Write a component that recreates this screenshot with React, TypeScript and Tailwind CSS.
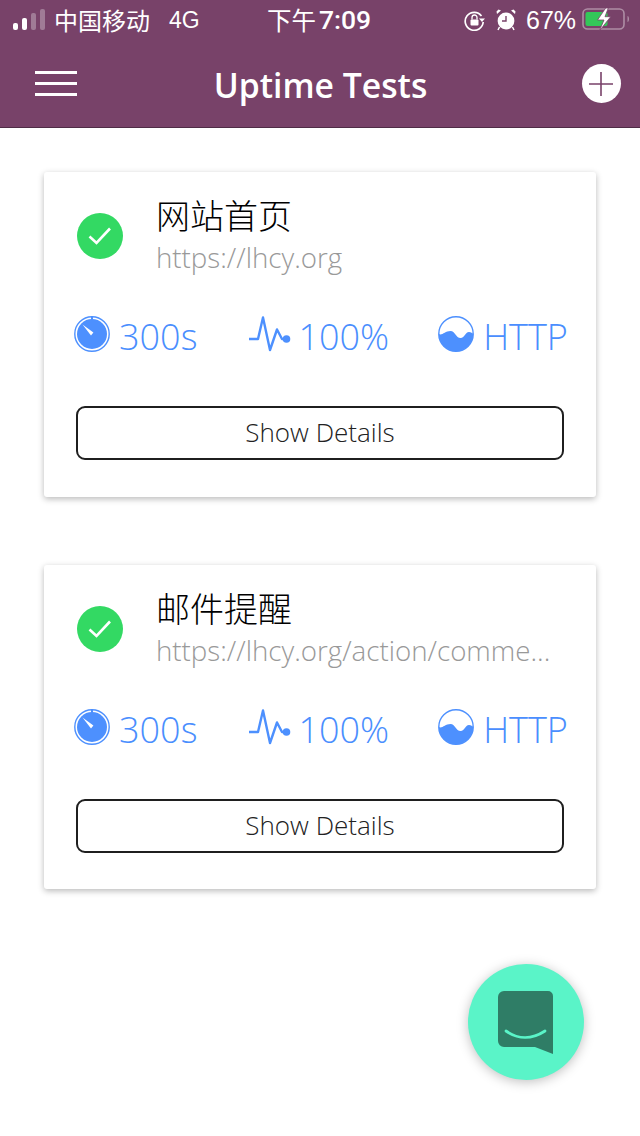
import React from "react";

const F = "font-['Open_Sans','Noto_Sans_CJK_SC',sans-serif]";

function Check() {
  return (
    <div className="w-[46px] h-[46px] mt-[20px] rounded-full bg-[#33d963] flex items-center justify-center shrink-0">
      <svg width="24" height="20" viewBox="0 0 24 20" fill="none">
        <path d="M1.5 10.5 L8.5 17 L22 2.5" stroke="#fff" strokeWidth="2.6" />
      </svg>
    </div>
  );
}

function Timer() {
  return (
    <svg width="36" height="36" viewBox="0 0 36 36">
      <circle cx="18" cy="18" r="17.2" fill="none" stroke="#4d90fe" strokeWidth="1.4" />
      <circle cx="18" cy="18" r="15" fill="#4d90fe" />
      <path d="M17 1 L19 1 L19 5 L17 5 Z" fill="#4d90fe" />
      <path d="M8.5 8.5 L19.4 16.6 L17 19.4 Z" fill="#fff" />
    </svg>
  );
}

function Pulse() {
  return (
    <svg width="42" height="36" viewBox="0 0 42 36" fill="none">
      <path d="M0 23 H9 L14 1.5 L21 34 L28 13.5 L33 23 H37" stroke="#4d90fe" strokeWidth="2.4" strokeLinejoin="round" />
      <circle cx="37.5" cy="23" r="3.8" fill="#4d90fe" />
    </svg>
  );
}

function Wave() {
  return (
    <svg width="36" height="36" viewBox="0 0 36 36">
      <circle cx="18" cy="18" r="17.2" fill="none" stroke="#4d90fe" strokeWidth="1.4" />
      <path d="M0.8 18 C4 20 7 15 12.5 15 C17 15 18 22 22.5 22 C27 22 27 16 31 16 C33 16 34.5 17 35.2 18 A17.2 17.2 0 0 1 0.8 18 Z" fill="#4d90fe" />
    </svg>
  );
}

function Stat({ icon, text, gap }: { icon: React.ReactNode; text: string; gap: string }) {
  return (
    <div className={`flex items-center ${gap}`}>
      <div className="-mt-[6px] shrink-0">{icon}</div>
      <span className="text-[36px] leading-[46px] font-light text-[#4a8efe]">{text}</span>
    </div>
  );
}

function Card({ title, url, h }: { title: string; url: string; h: string }) {
  return (
    <div className={`mx-[44px] w-[552px] ${h} bg-white rounded-[3px] shadow-[0_2px_6px_rgba(0,0,0,0.28)] flex flex-col`}>
      <div className="flex items-start pl-[33px] pt-[21px]">
        <Check />
        <div className="ml-[33px] w-[400px]">
          <div className="text-[34px] leading-[46px] font-light text-black">{title}</div>
          <div className="text-[27.7px] leading-[36px] font-light text-[#999999] whitespace-nowrap">{url}</div>
        </div>
      </div>
      <div className="flex items-center pl-[30px] mt-[39px]">
        <Stat icon={<Timer />} text="300s" gap="gap-[9px]" />
        <div className="ml-[52px]">
          <Stat icon={<Pulse />} text="100%" gap="gap-[7px]" />
        </div>
        <div className="ml-[49px]">
          <Stat icon={<Wave />} text="HTTP" gap="gap-[9px]" />
        </div>
      </div>
      <div className="mx-[32px] mt-[46px] h-[54px] pb-[1px] rounded-[9px] border-2 border-[#1f1f1f] flex items-center justify-center text-[26px] font-light text-[#222]">
        Show Details
      </div>
    </div>
  );
}

export default function App() {
  return (
    <div className={`relative w-[640px] h-[1136px] bg-white overflow-hidden ${F}`}>
      <header className="h-[128px] bg-[#784269] border-b border-[#4f2c46] text-white">
        <div className="h-[40px] flex items-center relative">
          <div className="flex items-end gap-[4px] ml-[13px] h-[21px] mt-[-1px]">
            <div className="w-[5px] h-[7px] rounded-[2px] bg-white" />
            <div className="w-[5px] h-[12px] rounded-[2px] bg-white" />
            <div className="w-[5px] h-[17px] rounded-[2px] bg-white/30" />
            <div className="w-[5px] h-[21px] rounded-[2px] bg-white/30" />
          </div>
          <span className="ml-[9px] text-[24px] leading-[32px] font-['Noto_Sans_CJK_SC','Liberation_Sans',sans-serif] font-normal w-[113px] whitespace-nowrap">中国移动</span>
          <span className="ml-[2px] text-[23px] leading-[32px] font-['Liberation_Sans',sans-serif]">4G</span>
          <span className="absolute left-[267px] top-[4px] flex items-center gap-[3px] leading-[32px] whitespace-nowrap">
            <span className="text-[24.5px] font-['Noto_Sans_CJK_SC',sans-serif]">下午</span>
            <span className="text-[26.5px] font-medium font-['Roboto',sans-serif]">7:09</span>
          </span>
          <div className="ml-auto flex items-center mr-[10px]">
            <svg width="21" height="21" viewBox="0 0 21 21" fill="none" className="mr-[11px]">
              <path d="M17.5 6 A9 9 0 1 0 19.2 12" stroke="#fff" strokeWidth="1.7" />
              <path d="M15 8.5 H21 L18 12 Z" fill="#fff" />
              <rect x="6.5" y="9.5" width="8" height="6" rx="1" fill="#fff" />
              <path d="M8 9.5 V7.5 A2.5 2.5 0 0 1 13 7.5 V9.5" stroke="#fff" strokeWidth="1.3" />
            </svg>
            <svg width="20" height="22" viewBox="0 0 20 22" className="mr-[10px]">
              <circle cx="10" cy="12" r="8.4" fill="#fff" />
              <path d="M10 7 V12 H6" stroke="#784269" strokeWidth="1.4" fill="none" />
              <path d="M1 5 L5 1.5 L2.5 0.5 L0.5 2.5 Z M19 5 L15 1.5 L17.5 0.5 L19.5 2.5 Z" fill="#fff" />
              <path d="M3.5 18 L2 21 M16.5 18 L18 21" stroke="#fff" strokeWidth="1.5" />
            </svg>
            <span className="text-[25px] leading-[32px] font-['Liberation_Sans',sans-serif] font-normal w-[56px] whitespace-nowrap">67%</span>
            <svg width="48" height="26" viewBox="0 0 48 26">
              <rect x="1" y="2" width="41" height="20" rx="4.5" fill="none" stroke="#fff" strokeOpacity="0.4" strokeWidth="1.6" />
              <rect x="3.5" y="5" width="22" height="14" rx="2" fill="#33c759" />
              <path d="M45.5 9 C47.5 9 47.5 15 45.5 15 Z" fill="#fff" fillOpacity="0.4" />
              <path d="M23.7 1 L15.5 13 H22 L17.3 24 L28.7 9.7 H23 L26.3 1 Z" fill="#fff" stroke="#784269" strokeWidth="0.8" />
            </svg>
          </div>
        </div>
        <div className="h-[87px] flex items-center justify-between pl-[35px] pr-[19px]">
          <div className="w-[42px] flex flex-col gap-[8px]">
            <div className="h-[3px] bg-white" />
            <div className="h-[3px] bg-white" />
            <div className="h-[3px] bg-white" />
          </div>
          <div className="text-[33.7px] leading-[46px] font-semibold mt-[3px] -ml-[18px]">Uptime Tests</div>
          <div className="w-[39px] h-[39px] rounded-full bg-white flex items-center justify-center">
            <svg width="24" height="24" viewBox="0 0 24 24">
              <path d="M0 12 H24 M12 0 V24" stroke="#784269" strokeWidth="1.6" />
            </svg>
          </div>
        </div>
      </header>

      <main className="pt-[44px] flex flex-col gap-[68px]">
        <Card title="网站首页" url="https://lhcy.org" h="h-[325px]" />
        <Card title="邮件提醒" url="https://lhcy.org/action/comme..." h="h-[324px]" />
      </main>

      <div className="absolute left-[468px] top-[964px] w-[116px] h-[116px] rounded-full bg-[#5af4c8] shadow-[0_2px_12px_rgba(0,0,0,0.25)] flex items-center justify-center">
        <svg width="56" height="64" viewBox="0 0 56 64" className="mt-[2px]">
          <path d="M6 0 H50 A5 5 0 0 1 55 5 V63 L37 56 H6 A6 6 0 0 1 0 50 V6 A6 6 0 0 1 6 0 Z" fill="#2f7d66" />
          <path d="M8 40 C20 48.5 34 48.5 47 40" stroke="#5af4c8" strokeWidth="2.8" fill="none" strokeLinecap="round" />
        </svg>
      </div>
    </div>
  );
}
